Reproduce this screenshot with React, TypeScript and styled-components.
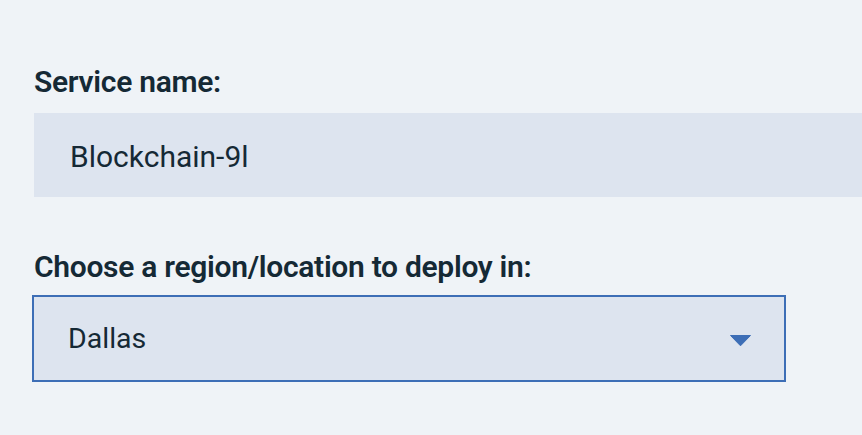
import React from "react";
import styled, { createGlobalStyle } from "styled-components";

const GlobalStyle = createGlobalStyle`
  html, body {
    margin: 0;
    padding: 0;
    background: #eff3f7;
  }
  body {
    font-family: Roboto, "Liberation Sans", sans-serif;
    color: #152935;
  }
`;

const Page = styled.main`
  width: 862px;
  height: 435px;
  box-sizing: border-box;
  padding: 64px 0 0 34px;
  background: #eff3f7;
  overflow: hidden;
  display: flex;
  flex-direction: column;
`;

const Field = styled.div<{ $gap?: number }>`
  display: flex;
  flex-direction: column;
  margin-bottom: ${(p) => p.$gap ?? 0}px;
`;

const Label = styled.label`
  font-size: 30px;
  line-height: 36px;
  font-weight: 600;
  color: #152935;
  letter-spacing: -0.3px;
`;

const TextInput = styled.div`
  margin-top: 13px;
  height: 84px;
  box-sizing: border-box;
  padding: 4px 0 0 36px;
  background: #dde4ef;
  display: flex;
  align-items: center;
  font-size: 30px;
  line-height: 36px;
  color: #152935;
`;

const Select = styled.div`
  margin-top: 12px;
  width: 750px;
  height: 83px;
  box-sizing: border-box;
  padding: 0 33px 0 34px;
  background: #dde4ef;
  outline: 2px solid #3d6eb6;
  display: flex;
  align-items: center;
  justify-content: space-between;
  font-size: 28.5px;
  line-height: 34px;
  color: #152935;
`;

const Chevron = styled.svg`
  width: 21px;
  height: 11px;
  margin-top: 4px;
  display: block;
`;

export default function App() {
  return (
    <Page>
      <GlobalStyle />
      <Field $gap={52}>
        <Label>Service name:</Label>
        <TextInput>Blockchain-9l</TextInput>
      </Field>
      <Field>
        <Label>Choose a region/location to deploy in:</Label>
        <Select>
          <span>Dallas</span>
          <Chevron viewBox="0 0 21 11">
            <path d="M0.5 0.5 H20.5 L10.5 10.8 Z" fill="#3d6eb6" stroke="#3d6eb6" strokeWidth="1" strokeLinejoin="round" />
          </Chevron>
        </Select>
      </Field>
    </Page>
  );
}
